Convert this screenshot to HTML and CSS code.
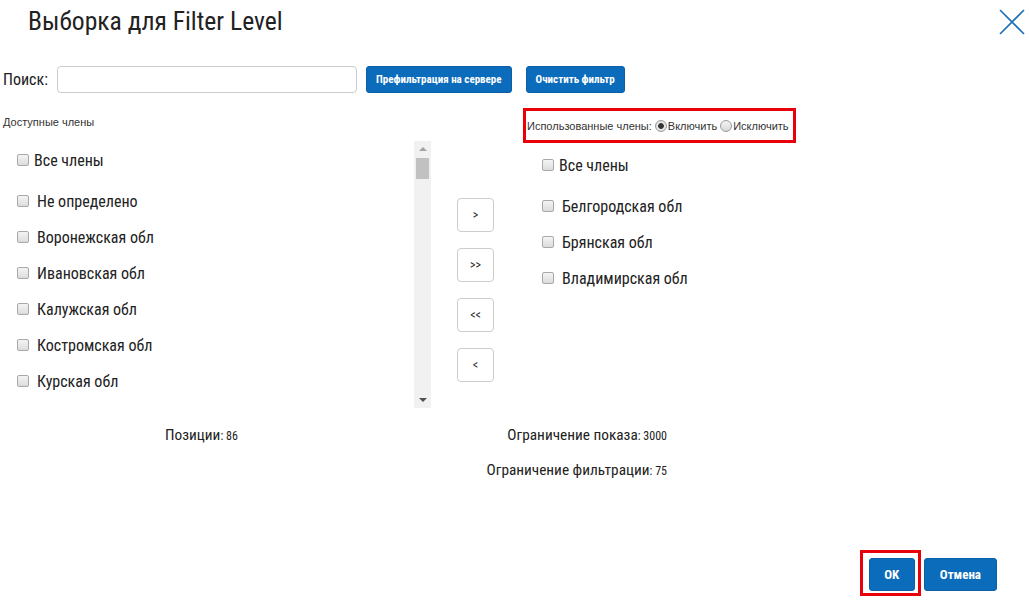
FILE: index.html
```html
<!DOCTYPE html>
<html>
<head>
    <link rel="stylesheet" href="styles.css">
</head>
<body>
    <div class="dialog">
        <div class="header">
            <h1>Выборка для Filter Level</h1>
            <svg class="close" width="26" height="26" viewBox="0 0 26 26">
                <path d="M1 1 L25 25 M25 1 L1 25" stroke="#1a6fb8" stroke-width="1.6" fill="none"/>
            </svg>
        </div>
        <div class="search">
            <label>Поиск:</label>
            <input type="text" class="search-input">
            <button class="btn btn-small">Префильтрация на сервере</button>
            <button class="btn btn-small">Очистить фильтр</button>
        </div>
        <div class="panels">
            <div class="panel-left">
                <div class="caption">Доступные члены</div>
                <div class="list-box">
                    <div class="list">
                        <label class="item item-all"><input type="checkbox"><span>Все члены</span></label>
                        <label class="item"><input type="checkbox"><span>Не определено</span></label>
                        <label class="item"><input type="checkbox"><span>Воронежская обл</span></label>
                        <label class="item"><input type="checkbox"><span>Ивановская обл</span></label>
                        <label class="item"><input type="checkbox"><span>Калужская обл</span></label>
                        <label class="item"><input type="checkbox"><span>Костромская обл</span></label>
                        <label class="item"><input type="checkbox"><span>Курская обл</span></label>
                    </div>
                    <div class="scrollbar">
                        <div class="arrow arrow-up"></div>
                        <div class="thumb"></div>
                        <div class="arrow arrow-down"></div>
                    </div>
                </div>
            </div>
            <div class="panel-middle">
                <button class="move">&gt;</button>
                <button class="move">&gt;&gt;</button>
                <button class="move">&lt;&lt;</button>
                <button class="move">&lt;</button>
            </div>
            <div class="panel-right">
                <div class="mode highlight">
                    Использованные члены:
                    <label><input type="radio" name="mode" checked>Включить</label>
                    <label><input type="radio" name="mode">Исключить</label>
                </div>
                <div class="list list-right">
                    <label class="item item-all"><input type="checkbox"><span>Все члены</span></label>
                    <label class="item"><input type="checkbox"><span>Белгородская обл</span></label>
                    <label class="item"><input type="checkbox"><span>Брянская обл</span></label>
                    <label class="item"><input type="checkbox"><span>Владимирская обл</span></label>
                </div>
            </div>
        </div>
        <div class="stats">
            <div class="stat-left">Позиции<small>: 86</small></div>
            <div class="stat-right">
                <div>Ограничение показа<small>: 3000</small></div>
                <div>Ограничение фильтрации<small>: 75</small></div>
            </div>
        </div>
        <div class="footer">
            <div class="highlight ok-wrap"><button class="btn btn-big">OK</button></div>
            <button class="btn btn-big">Отмена</button>
        </div>
    </div>
</body>
</html>
```

FILE: styles.css
```css
body {
    margin: 0;
    font-family: "Roboto Condensed", "Liberation Sans Narrow", Roboto, sans-serif;
    color: #222;
    background-color: #fff;
}
.dialog {
    width: 1029px;
    height: 601px;
    position: relative;
}
.header {
    display: flex;
    justify-content: space-between;
    align-items: flex-start;
    height: 60px;
}
h1 {
    margin: 6px 0 0 28px;
    font-size: 25.6px;
    font-weight: normal;
    color: #222;
}
.close {
    margin: 9px 4px 0 0;
}
.search {
    display: flex;
    align-items: center;
    height: 27px;
    margin-top: 6px;
    padding-left: 3px;
}
.search label {
    font-size: 16px;
    width: 54px;
}
.search-input {
    width: 300px;
    height: 27px;
    box-sizing: border-box;
    border: 1px solid #ccc;
    border-radius: 4px;
    margin-right: 9px;
}
.btn {
    background-color: #0b6cbb;
    color: #fff;
    border: 1px solid #0a5fa6;
    border-radius: 3px;
    font-family: inherit;
    font-weight: bold;
    cursor: pointer;
}
.btn-small {
    height: 27px;
    font-size: 11px;
    padding: 0 9px;
    margin-right: 14px;
}
.panels {
    display: flex;
    margin-top: 15px;
}
.panel-left {
    width: 431px;
}
.caption {
    font-family: "Liberation Sans", Arial, sans-serif;
    font-size: 11px;
    color: #333;
    padding: 8px 0 0 3px;
    height: 25px;
}
.list-box {
    display: flex;
    height: 267px;
}
.list {
    flex: 1;
    padding-left: 17px;
}
.item {
    display: flex;
    align-items: center;
    height: 36px;
    font-size: 16px;
}
.item input {
    appearance: none;
    width: 12px;
    height: 12px;
    margin: 0 8px 0 0;
    border: 1px solid #a9a9a9;
    border-radius: 2px;
    background: linear-gradient(#f4f4f4, #dcdcdc);
}
.item-all {
    height: 40px;
    margin-top: -1px;
}
.item-all span {
    margin-left: -3px;
}
.list .item-all + .item {
    margin-top: 3px;
}
.scrollbar {
    width: 17px;
    background-color: #f1f1f1;
    display: flex;
    flex-direction: column;
    align-items: center;
}
.arrow {
    width: 0;
    height: 0;
    border-left: 4px solid transparent;
    border-right: 4px solid transparent;
}
.arrow-up {
    margin-top: 6px;
    border-bottom: 4px solid #a3a3a3;
}
.arrow-down {
    margin-top: auto;
    margin-bottom: 6px;
    border-top: 4px solid #505050;
}
.thumb {
    width: 13px;
    height: 21px;
    margin-top: 7px;
    background-color: #c1c1c1;
}
.panel-middle {
    width: 92px;
    display: flex;
    flex-direction: column;
    gap: 16px;
    padding: 90px 0 0 26px;
    box-sizing: border-box;
}
.move {
    width: 37px;
    height: 34px;
    background-color: #fff;
    border: 1px solid #ccc;
    border-radius: 4px;
    font-family: inherit;
    font-size: 12px;
    color: #222;
}
.highlight {
    border: 3px solid #e8000b;
}
.mode {
    width: 266px;
    height: 29px;
    display: flex;
    align-items: center;
    font-family: "Liberation Sans", Arial, sans-serif;
    font-size: 11px;
    color: #333;
    padding-left: 1px;
}
.mode label {
    display: flex;
    align-items: center;
}
.mode input {
    appearance: none;
    margin: 0 1px 0 3px;
    width: 12px;
    height: 12px;
    border: 1px solid #9a9a9a;
    border-radius: 50%;
    background: linear-gradient(#f4f4f4, #d8d8d8);
}
.mode input:checked {
    background: radial-gradient(circle, #333 0, #333 2.5px, #e8e8e8 3.2px, #d8d8d8 100%);
}
.list-right {
    padding-left: 19px;
    padding-top: 3px;
}
.stats {
    display: flex;
    margin-top: 17px;
    font-size: 15.3px;
}
.stats small {
    font-size: 12px;
}
.stat-left {
    width: 172px;
    padding-left: 165px;
    line-height: 20px;
}
.stat-right {
    width: 330px;
    text-align: right;
    line-height: 20px;
    display: flex;
    flex-direction: column;
    gap: 14px;
}
.footer {
    position: absolute;
    right: 32px;
    bottom: 5px;
    display: flex;
    align-items: flex-end;
    gap: 3px;
}
.ok-wrap {
    padding: 5px 3px 2px 6px;
}
.btn-big {
    height: 33px;
    font-size: 13px;
    padding: 0 15px;
    margin-bottom: 5px;
}
.ok-wrap .btn-big {
    width: 46px;
    padding: 0;
    margin-bottom: 0;
}
```
